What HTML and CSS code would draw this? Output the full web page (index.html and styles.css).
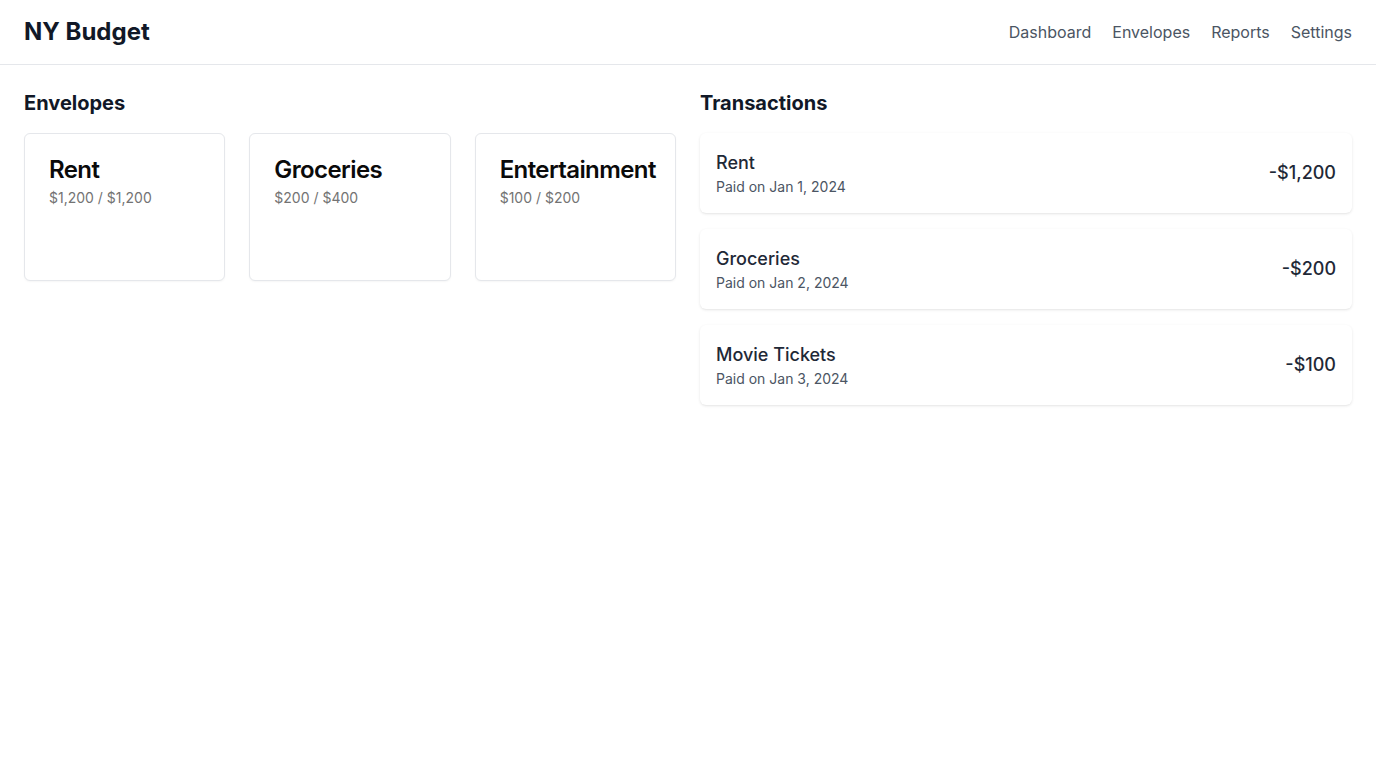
FILE: index.html
```html
<!DOCTYPE html>
<html lang="en">
<head>
<meta charset="utf-8">
<title>NY Budget</title>
<link rel="stylesheet" href="styles.css">
</head>
<body>
<header class="topbar">
  <div class="brand">NY Budget</div>
  <nav class="nav">
    <a href="#">Dashboard</a>
    <a href="#">Envelopes</a>
    <a href="#">Reports</a>
    <a href="#">Settings</a>
  </nav>
</header>
<main class="main">
  <section class="col">
    <h2 class="section-title">Envelopes</h2>
    <div class="envelopes">
      <div class="envelope">
        <div class="env-name">Rent</div>
        <div class="env-amount">$1,200 / $1,200</div>
      </div>
      <div class="envelope">
        <div class="env-name">Groceries</div>
        <div class="env-amount">$200 / $400</div>
      </div>
      <div class="envelope">
        <div class="env-name">Entertainment</div>
        <div class="env-amount">$100 / $200</div>
      </div>
    </div>
  </section>
  <section class="col">
    <h2 class="section-title">Transactions</h2>
    <div class="transactions">
      <div class="txn">
        <div class="txn-info">
          <div class="txn-name">Rent</div>
          <div class="txn-date">Paid on Jan 1, 2024</div>
        </div>
        <div class="txn-amount">-$1,200</div>
      </div>
      <div class="txn">
        <div class="txn-info">
          <div class="txn-name">Groceries</div>
          <div class="txn-date">Paid on Jan 2, 2024</div>
        </div>
        <div class="txn-amount">-$200</div>
      </div>
      <div class="txn">
        <div class="txn-info">
          <div class="txn-name">Movie Tickets</div>
          <div class="txn-date">Paid on Jan 3, 2024</div>
        </div>
        <div class="txn-amount">-$100</div>
      </div>
    </div>
  </section>
</main>
</body>
</html>
```

FILE: styles.css
```css
* { box-sizing: border-box; }
html, body { margin: 0; padding: 0; background: #fff; }
body {
  font-family: Inter, "Noto Sans", "Liberation Sans", sans-serif;
  color: #111827;
}
.topbar {
  height: 65px;
  padding: 0 24px;
  display: flex;
  align-items: center;
  justify-content: space-between;
  border-bottom: 1px solid #e5e7eb;
}
.brand {
  font-size: 24px;
  font-weight: 700;
  line-height: 32px;
  color: #111827;
}
.nav { display: flex; gap: 21px; }
.nav a {
  color: #4b5563;
  text-decoration: none;
  font-size: 16px;
  line-height: 24px;
}
.main {
  display: grid;
  grid-template-columns: minmax(0, 1fr) minmax(0, 1fr);
  gap: 24px;
  padding: 24px;
}
.section-title {
  margin: 0 0 16px;
  font-size: 20px;
  line-height: 28px;
  font-weight: 700;
  color: #111827;
}
.envelopes {
  display: grid;
  grid-template-columns: repeat(3, minmax(0, 1fr));
  gap: 24px;
}
.envelope {
  border: 1px solid #e5e7eb;
  border-radius: 6px;
  padding: 20px 24px 24px;
  height: 148px;
  box-shadow: 0 1px 2px rgba(0,0,0,0.04);
  background: #fff;
}
.env-name {
  font-size: 24px;
  line-height: 32px;
  font-weight: 600;
  letter-spacing: -0.025em;
  color: #0a0a0a;
}
.env-amount {
  margin-top: 2px;
  font-size: 14px;
  line-height: 20px;
  color: #737373;
}
.transactions {
  display: flex;
  flex-direction: column;
  gap: 16px;
}
.txn {
  display: flex;
  align-items: center;
  justify-content: space-between;
  padding: 16px;
  height: 80px;
  border-radius: 6px;
  background: #fff;
  box-shadow: 0 1px 3px rgba(0,0,0,0.1), 0 1px 2px -1px rgba(0,0,0,0.06);
}
.txn-name {
  font-size: 18px;
  line-height: 28px;
  font-weight: 500;
  color: #1f2937;
}
.txn-date {
  font-size: 14px;
  line-height: 20px;
  color: #4b5563;
}
.txn-amount {
  font-size: 18px;
  line-height: 28px;
  font-weight: 500;
  color: #1f2937;
}
```
